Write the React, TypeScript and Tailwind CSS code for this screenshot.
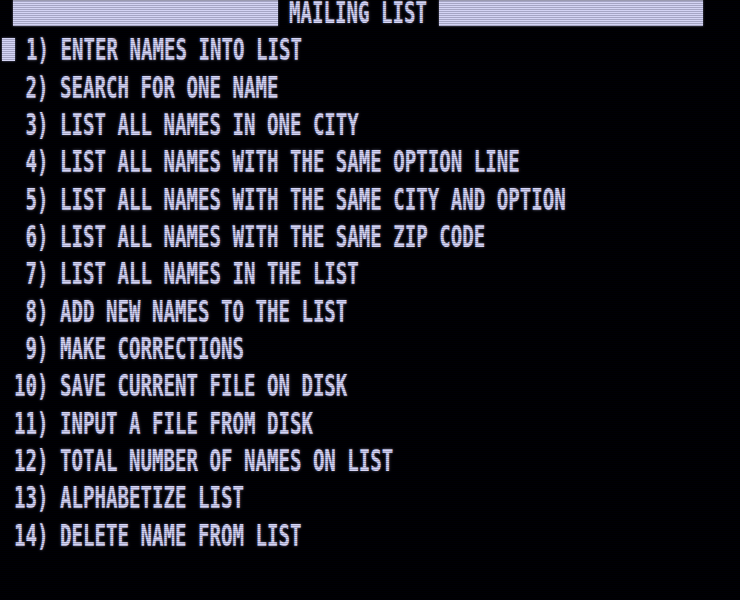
const MENU = [
  " 1) ENTER NAMES INTO LIST",
  "  2) SEARCH FOR ONE NAME",
  "  3) LIST ALL NAMES IN ONE CITY",
  "  4) LIST ALL NAMES WITH THE SAME OPTION LINE",
  "  5) LIST ALL NAMES WITH THE SAME CITY AND OPTION",
  "  6) LIST ALL NAMES WITH THE SAME ZIP CODE",
  "  7) LIST ALL NAMES IN THE LIST",
  "  8) ADD NEW NAMES TO THE LIST",
  "  9) MAKE CORRECTIONS",
  " 10) SAVE CURRENT FILE ON DISK",
  " 11) INPUT A FILE FROM DISK",
  " 12) TOTAL NUMBER OF NAMES ON LIST",
  " 13) ALPHABETIZE LIST",
  " 14) DELETE NAME FROM LIST",
];

// one character cell is 11.5px wide; glyphs are stretched vertically
const Glyphs = ({ text }: { text: string }) => (
  <span className="block whitespace-pre text-[19.1px] leading-[16.9px] font-bold text-[#d6d6f6] origin-top scale-y-[1.62] [text-shadow:0_0_2px_rgba(210,210,255,0.5)]">
    {text}
  </span>
);

const InverseBar = ({ cols }: { cols: number }) => (
  <div
    className="shrink-0 h-[26px] bg-[#d4d4f4] border-t border-[#9a9ab0] shadow-[0_0_2px_rgba(210,210,255,0.5)]"
    style={{ width: cols * 11.5 }}
  />
);

export default function App() {
  return (
    <div className="relative w-[740px] h-[600px] bg-black overflow-hidden font-['DejaVu_Sans_Mono',monospace]">
      <div className="flex flex-col pl-[2.5px]">
        <div className="flex items-start h-[37.33px]">
          <div className="shrink-0 w-[10.5px]" />
          <InverseBar cols={23} />
          <div className="shrink-0 w-[161px]">
            <Glyphs text=" MAILING LIST" />
          </div>
          <InverseBar cols={23} />
        </div>

        {MENU.map((line, i) => (
          <div key={i} className="flex items-start h-[37.33px]">
            {i === 0 && (
              <div className="w-[12.5px] h-[23px] mt-[1.1px] -ml-[0.5px] bg-[#d4d4f4] shadow-[0_0_2px_rgba(210,210,255,0.6)]" />
            )}
            <Glyphs text={line} />
          </div>
        ))}
      </div>

      {/* crt scanlines */}
      <div className="pointer-events-none absolute inset-0 bg-[repeating-linear-gradient(to_bottom,transparent_0px,transparent_1px,rgba(0,0,30,0.22)_1px,rgba(0,0,30,0.22)_2px)]" />
    </div>
  );
}
